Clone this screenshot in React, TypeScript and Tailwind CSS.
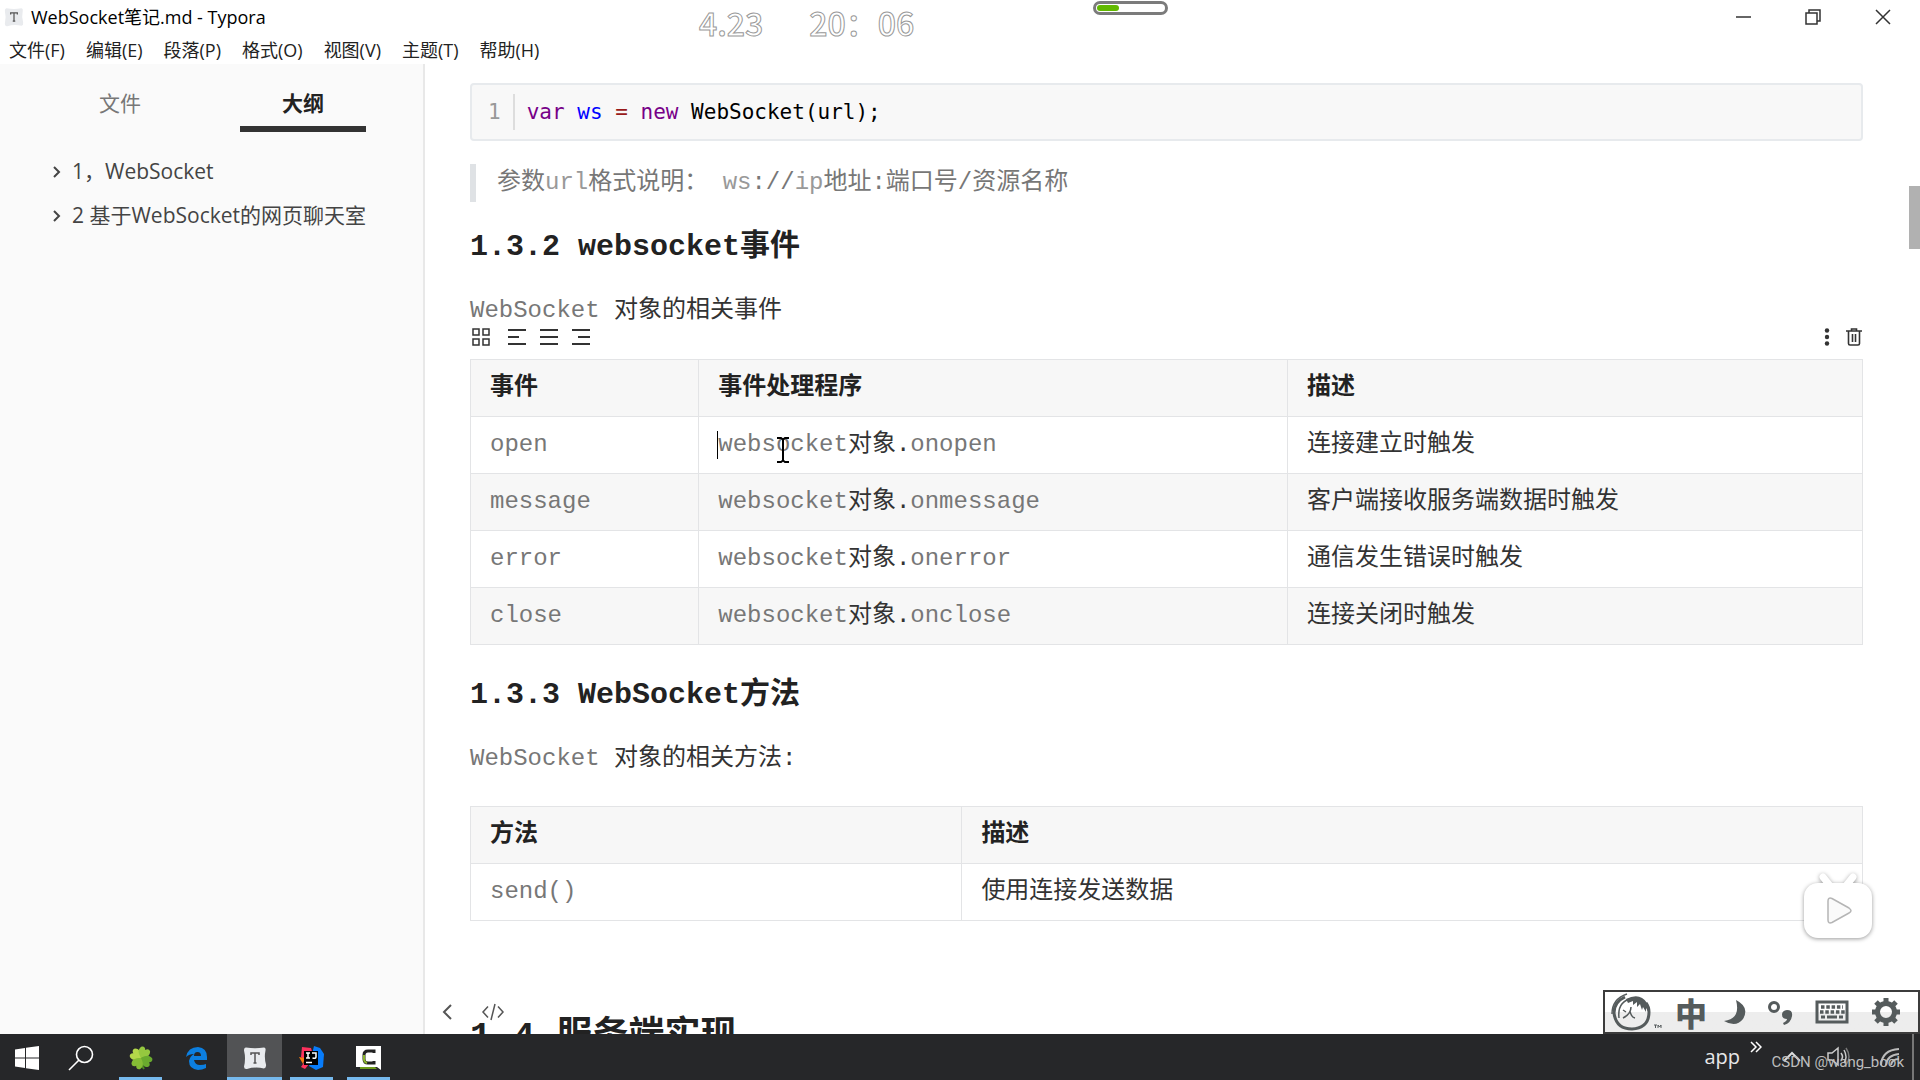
import { ReactNode } from 'react'

type TableData = {
  head: string[]
  rows: string[][]
}

const menus = ['文件(F)', '编辑(E)', '段落(P)', '格式(O)', '视图(V)', '主题(T)', '帮助(H)']

const outline = ['1，WebSocket', '2 基于WebSocket的网页聊天室']

const events: TableData = {
  head: ['事件', '事件处理程序', '描述'],
  rows: [
    ['open', 'websocket对象.onopen', '连接建立时触发'],
    ['message', 'websocket对象.onmessage', '客户端接收服务端数据时触发'],
    ['error', 'websocket对象.onerror', '通信发生错误时触发'],
    ['close', 'websocket对象.onclose', '连接关闭时触发'],
  ],
}

const methods: TableData = {
  head: ['方法', '描述'],
  rows: [['send()', '使用连接发送数据']],
}

// latin words are drawn lighter than the chinese text around them
function Prose({ text, latin = 'text-[#777]' }: { text: string; latin?: string }) {
  return (
    <>
      {text.split(/([A-Za-z()]+)/).map((part, i) =>
        i % 2 === 1 ? (
          <span key={i} className={latin}>
            {part}
          </span>
        ) : (
          part
        ),
      )}
    </>
  )
}

function DocTable({ data, widths, caret }: { data: TableData; widths: string[]; caret?: boolean }) {
  return (
    <table className="w-full table-fixed border-collapse border border-[#e3e4e6] text-left leading-9">
      <thead className="bg-[#f7f7f7]">
        <tr>
          {data.head.map((title, i) => (
            <th key={title} className={`border border-[#e3e4e6] px-[19px] py-2.5 font-bold text-[#222] ${widths[i]}`}>
              {title}
            </th>
          ))}
        </tr>
      </thead>
      <tbody>
        {data.rows.map((row, r) => (
          <tr key={row[0]} className="even:bg-[#f7f7f7]">
            {row.map((cell, c) => (
              <td key={c} className="relative border border-[#e3e4e6] px-[19px] py-2.5">
                <Prose text={cell} />
                {caret && r === 0 && c === 1 && (
                  <>
                    <span className="absolute top-3.5 left-[18px] h-7 w-px bg-black" />
                    <svg className="absolute top-5 left-[78px] h-[26px] w-3" viewBox="0 0 12 26" fill="none" stroke="#000" strokeWidth="2">
                      <path d="M0 1h4l2 1.5 2-1.5h4M6 2v22M0 25h4l2-1.5 2 1.5h4" />
                    </svg>
                  </>
                )}
              </td>
            ))}
          </tr>
        ))}
      </tbody>
    </table>
  )
}

function IconButton({ label, className = '', children }: { label: string; className?: string; children: ReactNode }) {
  return (
    <button type="button" aria-label={label} className={`flex items-center justify-center ${className}`}>
      {children}
    </button>
  )
}

function TyporaIcon({ size }: { size: number }) {
  return (
    <svg width={size} height={size} viewBox="0 0 24 24">
      <path d="M3 1.5q9 1.5 18 0 2 0 1.5 3-1.5 7 .5 14 .5 3-2 4-9-2-17 .5-3 .5-3-2.5 2-8 0-16 0-3 2-3z" fill="#e9ebee" />
      <path d="M8 9V7h8v2M12 7v10M10.500 17h3" stroke="#555" strokeWidth="1.5" fill="none" />
    </svg>
  )
}

function TitleBar() {
  return (
    <div className="flex h-[34px] items-center justify-between pr-7 pl-1">
      <div className="flex items-center gap-[7px] text-lg text-black">
        <TyporaIcon size={20} />
        WebSocket笔记.md - Typora
      </div>
      <div className="flex items-center gap-[52px] text-[#333]">
        <IconButton label="最小化">
          <svg width="18" height="18" viewBox="0 0 18 18" stroke="currentColor" strokeWidth="1.5">
            <path d="M2 9h15" />
          </svg>
        </IconButton>
        <IconButton label="还原">
          <svg width="18" height="18" viewBox="0 0 18 18" fill="none" stroke="currentColor" strokeWidth="1.5">
            <path d="M2 5h11v11H2zM5 5V2h11v11h-3" />
          </svg>
        </IconButton>
        <IconButton label="关闭">
          <svg width="18" height="18" viewBox="0 0 18 18" stroke="currentColor" strokeWidth="1.5">
            <path d="M2 2l14 14M16 2L2 16" />
          </svg>
        </IconButton>
      </div>
    </div>
  )
}

function Sidebar() {
  return (
    <aside className="w-[425px] shrink-0 border-r-2 border-[#e8e8e8] bg-[#fafafa] text-[21px] text-[#444]">
      <div className="flex pt-5 pl-14">
        <button type="button" className="h-12 w-32 pb-2 text-[#777]">
          文件
        </button>
        <button type="button" className="ml-14 h-12 w-[126px] border-b-6 border-[#333] pb-0.5 font-bold text-[#222]">
          大纲
        </button>
      </div>
      <ul className="pt-[18px] pl-[52px]">
        {outline.map((item) => (
          <li key={item} className="flex h-11 items-center gap-2.5">
            <svg width="10" height="12" viewBox="0 0 10 12" fill="none" stroke="#444" strokeWidth="2">
              <path d="M2 1l5 5-5 5" />
            </svg>
            <a href="#outline">{item}</a>
          </li>
        ))}
      </ul>
    </aside>
  )
}

function TableToolbar() {
  return (
    <div className="flex h-[18px] items-center text-[#333]">
      <IconButton label="调整表格">
        <svg width="22" height="18" viewBox="0 0 22 18" fill="none" stroke="currentColor" strokeWidth="1.5">
          <path d="M3 1h6v6H3zM13 1h6v6h-6zM3 11h6v6H3zM13 11h6v6h-6z" />
        </svg>
      </IconButton>
      <div className="flex gap-3.5 pl-4">
        <IconButton label="左对齐">
          <svg width="18" height="18" viewBox="0 0 18 18" stroke="currentColor" strokeWidth="2">
            <path d="M0 2h18M0 9h11M0 16h18" />
          </svg>
        </IconButton>
        <IconButton label="居中">
          <svg width="18" height="18" viewBox="0 0 18 18" stroke="currentColor" strokeWidth="2">
            <path d="M0 2h18M0 9h18M0 16h18" />
          </svg>
        </IconButton>
        <IconButton label="右对齐">
          <svg width="18" height="18" viewBox="0 0 18 18" stroke="currentColor" strokeWidth="2">
            <path d="M0 2h18M6 9h12M0 16h18" />
          </svg>
        </IconButton>
      </div>
      <div className="ml-auto flex gap-3.5">
        <IconButton label="更多">
          <svg width="8" height="18" viewBox="0 0 8 18" fill="currentColor">
            <circle cx="4" cy="2.5" r="2.2" />
            <circle cx="4" cy="9" r="2.2" />
            <circle cx="4" cy="15.5" r="2.2" />
          </svg>
        </IconButton>
        <IconButton label="删除表格">
          <svg width="18" height="18" viewBox="0 0 18 18" fill="none" stroke="currentColor" strokeWidth="1.6">
            <path d="M1 3h16M6.5 2.5V1h5v1.5M3.5 3v12.5q0 1.5 1.5 1.5h8q1.5 0 1.5-1.5V3M7.5 6v8M10.5 6v8" />
          </svg>
        </IconButton>
      </div>
    </div>
  )
}

function Document() {
  return (
    <main className="relative min-w-0 flex-1 overflow-hidden bg-white pt-[19px] pr-[57px] pl-[45px] font-['Liberation_Mono','Noto_Sans_CJK_SC',monospace] text-2xl text-[#333]">
      <pre className="flex h-[58px] items-center rounded border-2 border-[#e7eaed] bg-[#f8f8f8] pl-4 font-['DejaVu_Sans_Mono',monospace] text-[21px] text-black">
        <span className="border-r-2 border-[#ddd] pr-3 leading-9 text-[#999]">1</span>
        <code className="pl-3 font-['DejaVu_Sans_Mono',monospace]">
          <span className="text-[#708]">var</span> <span className="text-[#00f]">ws</span>{' '}
          <span className="text-[#981a1a]">=</span> <span className="text-[#708]">new</span> WebSocket(url);
        </code>
      </pre>
      <blockquote className="mt-[23px] border-l-6 border-[#dfe2e5] pl-[21px] leading-[38px] whitespace-nowrap text-[#777]">
        <Prose text="参数url格式说明： ws://ip地址:端口号/资源名称" latin="text-[#999]" />
      </blockquote>
      <h3 className="mt-[27px] text-3xl font-bold text-[#222]">1.3.2 websocket事件</h3>
      <p className="mt-[29px] leading-[34px]">
        <Prose text="WebSocket 对象的相关事件" />
      </p>
      <TableToolbar />
      <div className="mt-[13px]">
        <DocTable data={events} widths={['w-[16.4%]', 'w-[42.3%]', 'w-[41.3%]']} caret />
      </div>
      <h3 className="mt-8 text-3xl font-bold text-[#222]">1.3.3 WebSocket方法</h3>
      <p className="mt-[29px] mb-[30px] leading-[34px]">
        <Prose text="WebSocket 对象的相关方法:" />
      </p>
      <DocTable data={methods} widths={['w-[35.3%]', 'w-[64.7%]']} />
      <h2 className="mt-[97px] text-4xl font-bold whitespace-nowrap text-[#222]">1.4 服务端实现</h2>

      <div className="absolute bottom-3 left-3.5 flex gap-7 text-[#555]">
        <IconButton label="侧边栏">
          <svg width="14" height="20" viewBox="0 0 14 20" fill="none" stroke="currentColor" strokeWidth="2">
            <path d="M12 3l-7 7 7 7" />
          </svg>
        </IconButton>
        <IconButton label="源代码模式">
          <svg width="24" height="20" viewBox="0 0 24 20" fill="none" stroke="currentColor" strokeWidth="1.5">
            <path d="M7 4.5L2 10l5 5.5M17 4.5l5 5.5-5 5.5M14 2l-4 16" />
          </svg>
        </IconButton>
      </div>
      <div className="absolute top-[122px] right-0 h-[63px] w-[11px] bg-[#b1b1b1]" />
      <BiliBadge />
      <ImeBar />
    </main>
  )
}

function BiliBadge() {
  return (
    <svg
      className="absolute right-10 bottom-[86px] h-20 w-20 drop-shadow-[0_1px_2px_rgba(0,0,0,0.4)]"
      viewBox="0 0 80 80"
    >
      <path d="M23 9l8 10M53 9l-8 10" stroke="#fff" strokeWidth="7" strokeLinecap="round" />
      <rect x="4" y="15" width="68" height="55" rx="14" fill="#fff" />
      <path d="M28 33q0-4 4-2.5l17 9.500q4 3 0 5l-17 9.500q-4 1.5-4-2.5z" fill="#fafafa" stroke="#b5b5b5" strokeWidth="1.5" />
    </svg>
  )
}

function ImeBar() {
  return (
    <div className="absolute right-0 bottom-0 flex h-11 w-[317px] items-center border-2 border-[#3c3c3c] bg-linear-to-b from-white from-50% to-[#ededed] to-50% text-[#555b5c]">
      <IconButton label="输入法" className="ml-1.5">
        <svg width="52" height="40" viewBox="0 0 52 40" fill="none" stroke="currentColor">
          <path d="M14 5Q3 10 3 21q2 16 18 16 17-1 17-17 0-5-3-9" strokeWidth="3" />
          <path d="M1 22Q1 7 16 2M8 26Q6 9 22 6" strokeWidth="1.5" />
          <path d="M15 7q14-7 21 4 3 5 2 10l-3-5v4l-3-5-1 3-2-6-3 3v-5l-4 3v-4l-5 2z" fill="currentColor" stroke="none" />
          <path d="M20 15q0 7-8 11M19 19q1 6 5 7M15 20l-3-2" strokeWidth="1.5" />
          <path d="M43 33h3M44.5 33v3M47 36v-3l1.5 2 1.5-2v3" strokeWidth="1" />
        </svg>
      </IconButton>
      <button type="button" className="ml-3 font-['Noto_Sans_CJK_SC',sans-serif] text-[32px] leading-9 font-black">
        中
      </button>
      <IconButton label="半角" className="ml-4">
        <svg width="24" height="28" viewBox="0 0 24 28" fill="currentColor">
          <path d="M13 2q14 7 7 19-7 9-19 2 17-2 12-21z" />
        </svg>
      </IconButton>
      <IconButton label="标点" className="ml-5">
        <svg width="28" height="28" viewBox="0 0 28 28">
          <circle cx="7" cy="9" r="4.5" fill="none" stroke="currentColor" strokeWidth="3" />
          <path d="M20 12q6 0 5 6-1 7-8 9l-1-2q4-2 4-4-5 0-5-4.5 0-4 5-4.500z" fill="currentColor" />
        </svg>
      </IconButton>
      <IconButton label="软键盘" className="ml-5">
        <svg width="34" height="24" viewBox="0 0 34 24" fill="none" stroke="currentColor">
          <rect x="2" y="2" width="30" height="20" strokeWidth="3" />
          <path d="M6 7h22M5 12h25" strokeWidth="3.5" strokeDasharray="3.5 1.8" />
          <path d="M6 17h4M12 17h10M24 17h4" strokeWidth="3" />
        </svg>
      </IconButton>
      <IconButton label="设置" className="ml-[22px]">
        <svg width="30" height="30" viewBox="0 0 30 30" fill="none" stroke="currentColor">
          <circle cx="15" cy="15" r="8.5" strokeWidth="5" />
          <path d="M15 1v5M15 24v5M1 15h5M24 15h5M5 5l4 4M21 21l4 4M25 5l-4 4M9 21l-4 4" strokeWidth="5" />
        </svg>
      </IconButton>
    </div>
  )
}

function TaskButton({ label, className = '', children }: { label: string; className?: string; children: ReactNode }) {
  return (
    <button type="button" aria-label={label} className={`flex h-full items-center justify-center border-b-3 pt-1 ${className}`}>
      {children}
    </button>
  )
}

function Taskbar() {
  return (
    <footer className="relative flex h-[46px] shrink-0 items-center bg-[#262729] text-[#e8e8e8]">
      <TaskButton label="开始" className="w-[54px] border-transparent">
        <svg width="24" height="24" viewBox="0 0 24 24" fill="#fff">
          <path d="M0 3.5l10-1.5v9.500H0zM11 1.8L24 0v11.5H11zM0 12.5h10V22L0 20.5zM11 12.5h13V24l-13-1.8z" />
        </svg>
      </TaskButton>
      <TaskButton label="搜索" className="w-[54px] border-transparent">
        <svg width="26" height="26" viewBox="0 0 26 26" fill="none" stroke="#fff" strokeWidth="1.6">
          <circle cx="16.5" cy="9.5" r="8" />
          <path d="M11 15L1 25" />
        </svg>
      </TaskButton>
      <TaskButton label="四叶草" className="ml-[11px] w-[43px] border-[#76b9ed]">
        <svg width="26" height="26" viewBox="-13 -13 26 26">
          <path d="M0 0q0 7 3 11" stroke="#4d8f1d" strokeWidth="2" fill="none" />
          <path d="M0 0C-5-3-7-6-5-10-3-12-1-11 0-9 1-11 3-12 5-10 7-6 5-3 0 0z" fill="#b4d84a" transform="rotate(-58)" />
          <path d="M0 0C-5-3-7-6-5-10-3-12-1-11 0-9 1-11 3-12 5-10 7-6 5-3 0 0z" fill="#95c83f" transform="rotate(28)" />
          <path d="M0 0C-5-3-7-6-5-10-3-12-1-11 0-9 1-11 3-12 5-10 7-6 5-3 0 0z" fill="#6aab2e" transform="rotate(118)" />
          <path d="M0 0C-5-3-7-6-5-10-3-12-1-11 0-9 1-11 3-12 5-10 7-6 5-3 0 0z" fill="#85bd35" transform="rotate(-148)" />
        </svg>
      </TaskButton>
      <TaskButton label="Edge" className="ml-[11px] w-[48px] border-transparent">
        <svg width="22" height="24" viewBox="0 0 22 24" fill="#0c7fe0">
          <path d="M0 11Q2 1 12 1q9 1 9 10v3H8q1 5 6 5 4 0 6-1v4q-4 2-8 2Q3 23 3 15q1-5 5-7-5 0-8 3zm8-1h7q0-4-3.5-4T8 10z" />
        </svg>
      </TaskButton>
      <TaskButton label="Typora" className="ml-1.5 w-[55px] border-[#76b9ed] bg-[#525355]">
        <TyporaIcon size={24} />
      </TaskButton>
      <TaskButton label="IntelliJ IDEA" className="ml-2 w-[43px] border-[#76b9ed]">
        <svg width="26" height="26" viewBox="0 0 26 26">
          <path d="M3 2l9 1 3 10-9 11-4-2 4-6-4-4z" fill="#fe315d" />
          <path d="M0 12l6 1-2 6z" fill="#f97a12" />
          <path d="M15 1l6 2 4 6-1 13-7 3-7-4z" fill="#087cfa" />
          <rect x="5" y="6" width="14" height="14" fill="#000" />
          <path d="M7 8h4M9 8v5M7 13h4M13 8h4v4q0 2-3.500 1M7 17.5h6" stroke="#fff" strokeWidth="1.5" fill="none" />
        </svg>
      </TaskButton>
      <TaskButton label="Camtasia" className="ml-3.5 w-[43px] border-[#76b9ed]">
        <svg width="26" height="26" viewBox="0 0 26 26">
          <path d="M0 1h25v24l-4-3H0z" fill="#fff" />
          <path d="M4 22h15l2 2H4z" fill="#6f9c1c" />
          <path d="M18 8V6h-6q-4 0-4 4v4q0 4 4 4h6v-2" stroke="#222" strokeWidth="3" fill="none" />
          <path d="M8 10v4q0 3 3 4" stroke="#8cb52b" strokeWidth="2" fill="none" />
        </svg>
      </TaskButton>

      <div className="ml-auto flex h-full items-center">
        <span className="text-xl">app</span>
        <svg className="mb-5 ml-2.5 h-3 w-3" viewBox="0 0 12 12" fill="none" stroke="#fff" strokeWidth="1.5">
          <path d="M1 1l5 5-5 5M6 1l5 5-5 5" />
        </svg>
        <svg className="ml-5 h-5 w-5" viewBox="0 0 20 20" fill="none" stroke="#ddd" strokeWidth="2">
          <path d="M2 14l8-8 8 8" />
        </svg>
        <svg className="ml-6 h-6 w-6" viewBox="0 0 24 24" fill="none" stroke="#ccc" strokeWidth="1.5">
          <path d="M2 8h4l6-5v17l-6-5H2zM15 8q3 4 0 7M18 5q4 7 0 13" />
          <path d="M20 3q6 9 0 17" stroke="#777" />
        </svg>
        <svg className="ml-7 h-6 w-6" viewBox="0 0 24 24" fill="none" stroke="#bbb" strokeWidth="2">
          <path d="M3 20Q4 5 21 4M8 20Q9 10 21 9M13 20q1-6 8-6" />
        </svg>
        <span className="mr-1.5 ml-2.5 h-full w-0.5 bg-[#777]" />
      </div>
      <span className="absolute right-4 bottom-1.5 font-['Roboto',sans-serif] text-[15px] leading-6 text-[#bdbdbd]">CSDN @wang_book</span>
    </footer>
  )
}

export default function App() {
  return (
    <div className="relative flex h-screen flex-col overflow-hidden bg-white font-['Open_Sans','Noto_Sans_CJK_SC',sans-serif]">
      <header className="h-16 shrink-0">
        <TitleBar />
        <nav className="flex h-8 items-center gap-[21px] pl-[9px] text-lg text-[#222]">
          {menus.map((menu) => (
            <button key={menu} type="button" className="whitespace-nowrap">
              {menu}
            </button>
          ))}
        </nav>
      </header>
      <div className="flex min-h-0 flex-1">
        <Sidebar />
        <Document />
      </div>
      <Taskbar />

      {/* recorder clock and battery float over the window */}
      <div className="absolute top-0 left-[699px] flex h-11 items-center gap-[46px] font-['Noto_Sans_CJK_SC',sans-serif] text-[32px] font-medium text-white [-webkit-text-stroke:1px_#999]">
        <span>4.23</span>
        <span>20：06</span>
      </div>
      <div className="absolute top-px left-[1093px] h-3.5 w-[75px] rounded-full border-3 border-[#7b7b7b] bg-white p-px">
        <div className="h-full w-[22px] rounded-full bg-[#62b900]" />
      </div>
    </div>
  )
}
